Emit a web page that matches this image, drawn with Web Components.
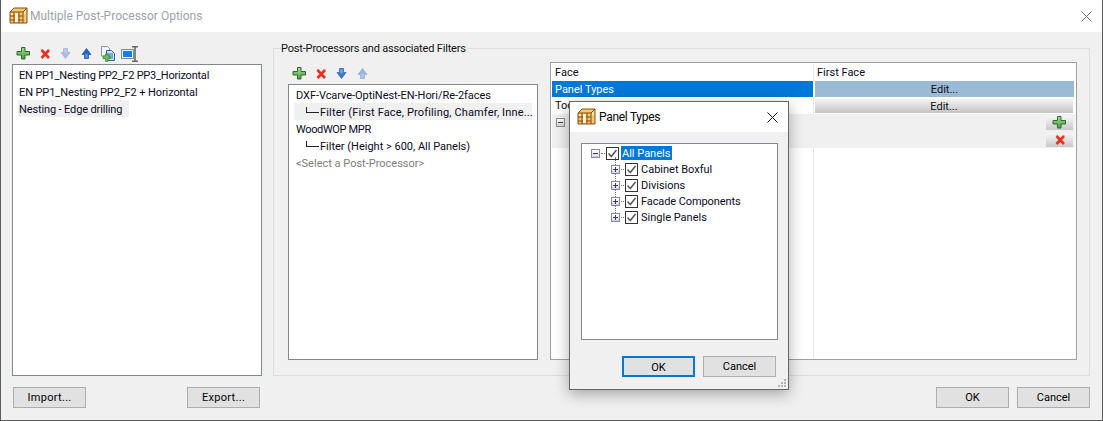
<!DOCTYPE html>
<html><head><meta charset="utf-8"><title>Multiple Post-Processor Options</title>
<style>
html,body{margin:0;padding:0;background:#f0f0f0}
body{font:11px Roboto,"Noto Sans",sans-serif;color:#000;width:1103px;height:421px;overflow:hidden}
</style></head><body>
<pp-window>
  <pp-titlebar slot="title" dim>Multiple Post-Processor Options</pp-titlebar>
  <div slot="left" style="display:contents">
    <pp-toolbar gap="5"><pp-icon name="plus"></pp-icon><pp-icon name="cross"></pp-icon><pp-icon name="down" faded></pp-icon><pp-icon name="up"></pp-icon><pp-icon name="copy"></pp-icon><pp-icon name="rename"></pp-icon></pp-toolbar>
  </div>
  <pp-list slot="leftlist">
    <pp-item style="letter-spacing:-.22px;padding-left:1px">EN PP1_Nesting PP2_F2 PP3_Horizontal</pp-item>
    <pp-item style="letter-spacing:-.1px;padding-left:1px">EN PP1_Nesting PP2_F2 + Horizontal</pp-item>
    <pp-item current fit style="letter-spacing:-.13px;padding-left:1px">Nesting - Edge drilling</pp-item>
  </pp-list>
  <pp-group slot="group" label="Post-Processors and associated Filters">
    <div style="display:flex;gap:12px;align-items:flex-start;flex:1">
      <div style="display:flex;flex-direction:column;width:250px;flex:none;height:294px">
        <pp-toolbar gap="5" style="margin:0 0 2px 4px"><pp-icon name="plus"></pp-icon><pp-icon name="cross"></pp-icon><pp-icon name="down"></pp-icon><pp-icon name="up" faded></pp-icon></pp-toolbar>
        <pp-list style="flex:1">
          <pp-item style="letter-spacing:-.05px">DXF-Vcarve-OptiNest-EN-Hori/Re-2faces</pp-item>
          <pp-item current indent style="letter-spacing:.15px">Filter (First Face, Profiling, Chamfer, Inne...</pp-item>
          <pp-item style="letter-spacing:-.35px">WoodWOP MPR</pp-item>
          <pp-item indent>Filter (Height &gt; 600, All Panels)</pp-item>
          <pp-item muted>&lt;Select a Post-Processor&gt;</pp-item>
        </pp-list>
      </div>
      <pp-grid style="margin-top:-4px"></pp-grid>
    </div>
  </pp-group>
  <pp-button slot="import" style="letter-spacing:.3px">Import...</pp-button>
  <pp-button slot="export" style="letter-spacing:.3px">Export...</pp-button>
  <pp-button slot="ok">OK</pp-button>
  <pp-button slot="cancel">Cancel</pp-button>
  <pp-dialog slot="dialog">
    <pp-tree>
      <pp-node root selected>All Panels</pp-node>
      <pp-node>Cabinet Boxful</pp-node>
      <pp-node>Divisions</pp-node>
      <pp-node style="letter-spacing:-.1px">Facade Components</pp-node>
      <pp-node last>Single Panels</pp-node>
    </pp-tree>
  </pp-dialog>
</pp-window>
<script>
const ICONS={
plus:`<defs><linearGradient id="g" x1="0" y1="0" x2="0" y2="1"><stop offset="0" stop-color="#a6dc94"/><stop offset="1" stop-color="#4f9a45"/></linearGradient></defs><path d="M5.5 1.500h3.500v4h4.500v3.500H9v4H5.500V9H1V5.500h4.500z" fill="url(#g)" stroke="#2f6b2c"/>`,
cross:`<path d="M4.500 4L12 12M12 4L4.500 12" stroke="#e8301c" stroke-width="2.600" fill="none"/><path d="M3.800 3.500l1.200-.300M11.400 3.200l1.200.300" stroke="#ff9a80" stroke-width="1" fill="none"/>`,
down:`<path d="M5.500 2.500h4v4h2.500L7.500 12.500 3 6.500h2.500z" fill="#3f78d0" stroke="#2c5aa8" stroke-width=".7"/><path d="M6.300 3.300h2.400v4H6.300z" fill="#7ba6e6"/>`,
up:`<path d="M5.500 12.500h4v-4h2.500L7.500 2.500 3 8.500h2.500z" fill="#1f66c8" stroke="#1c4f9c" stroke-width=".7"/><path d="M6.300 11.700h2.400v-4H6.300z" fill="#5e97e6"/>`,
copy:`<path d="M1.500.5h6l2 2V10h-8z" fill="#f3f7fc" stroke="#7d95b4"/><path d="M6.500 4.500h5l3 3v7h-8z" fill="#cfe0f4" stroke="#2f5f9e"/><path d="M8 8h5M8 10h5M8 12h5" stroke="#2f6fc0"/><path d="M3 10h2.500V7.800H8V10h2v2.500H8v2.800H5.500v-2.800H3z" fill="#6fc05c" stroke="#2f7a2c" stroke-width=".7"/>`,
rename:`<rect x=".5" y="3.500" width="12" height="9" fill="#eef2f7" stroke="#7c8ca4"/><rect x="2" y="5" width="9" height="6" fill="#1080f0"/><path d="M11 .8h6M11 15.200h6M14 .8v14.400" stroke="#6a6a6a" stroke-width="1.600" fill="none"/>`};
function def(tag,css,html,init){
  customElements.define(tag,class extends HTMLElement{
    constructor(){super();const r=this.attachShadow({mode:'open'});r.innerHTML=`<style>${css}</style>`+(typeof html==='function'?html(this):html);}
    connectedCallback(){if(init&&!this._i){this._i=1;init(this)}}
  });
}
def('pp-icon',`:host{display:inline-block;width:16px;height:16px;flex:none;line-height:0}:host([faded]){opacity:.42}svg{display:block;width:16px;height:16px}`,'',el=>{
  el.shadowRoot.innerHTML+=`<svg viewBox="0 0 16 16" style="overflow:visible">${ICONS[el.getAttribute('name')]}</svg>`;
});
def('pp-appicon',`:host{display:block;width:19px;height:18px;flex:none;margin-top:-2px}svg{display:block}`,`<svg width="19" height="18" viewBox="0 0 19 18"><path d="M1 6L5 2h13v15H1z" fill="#f3c873" stroke="#8a4a12"/><path d="M1 6h13l4-4M14 6v11M1 10h13M1 14h13M5 6v11M10 6v11M14 6" stroke="#8a4a12" fill="none"/><rect x="6" y="7" width="3" height="9" fill="#fff3c8"/><path d="M15 6l2-2v3l-2 2zM2 7h2v2H2z" fill="#ffe9a8"/></svg>`);
def('pp-titlebar',`:host{display:flex;align-items:center;height:32px;background:#fff;padding-left:8px;gap:2px;font-size:12px;box-sizing:border-box;flex:none}
 .t{color:#000}:host([dim]) .t{color:#9aa3ad}:host([dim]) svg.x{stroke:#6e6e6e}.sp{flex:1}svg.x{stroke:#111;margin-right:10px}`,
 `<pp-appicon></pp-appicon><span class="t"><slot></slot></span><span class="sp"></span><svg class="x" width="11" height="11" viewBox="0 0 11 11" fill="none"><path d="M.5.5l10 10M10.500.5l-10 10"/></svg>`);
def('pp-toolbar',`:host{display:flex;align-items:center;flex:none;height:16px}`,`<slot></slot>`,el=>{el.style.gap=(el.getAttribute('gap')||4)+'px'});
def('pp-list',`:host{display:flex;flex-direction:column;background:#fff;border:1px solid #828790;box-sizing:border-box;padding:1px 5px}`,`<slot></slot>`);
def('pp-item',`:host{display:flex;align-items:center;height:17px;box-sizing:border-box;padding-top:2px;padding-left:2px;white-space:nowrap;color:#0a0a1e;flex:none}
 :host([current]){background:#f0f0f0}:host([fit]){align-self:flex-start;padding-right:7px}:host([muted]){color:#7d7d7d}
 .l{display:none;flex:none;width:12px;height:5px;margin:-5px 1px 0 10px;border-left:1px solid #222;border-bottom:1px solid #222;box-sizing:content-box}:host([indent]) .l{display:block}`,`<span class="l"></span><slot></slot>`);
def('pp-button',`:host{display:inline-flex;align-items:center;justify-content:center;box-sizing:border-box;width:73px;height:21px;background:#e1e1e1;border:1px solid #adadad;color:#000;flex:none}
 :host([default]){border:2px solid #0078d7;padding-top:1px}`,`<slot></slot>`);
def('pp-group',`:host{display:flex;flex-direction:column;box-sizing:border-box;border:1px solid #dcdcdc;padding:0 12px 16px 14px;width:817px;height:328px}
 .lab{align-self:flex-start;margin:-8px 0 0 -7px;padding:0 2px 0 0;height:16px;line-height:16px;background:#f0f0f0;color:#111;letter-spacing:-.17px}
 .c{display:flex;flex:1;margin-top:9px}`,
 `<span class="lab" id="l"></span><div class="c"><slot></slot></div>`,el=>{el.shadowRoot.getElementById('l').textContent=el.getAttribute('label')});
def('pp-box',`:host{display:inline-block;width:9px;height:9px;box-sizing:border-box;border:1px solid #8a8a8a;background:linear-gradient(#fff,#d8d8d8);position:relative;flex:none}
 i,b{position:absolute;background:#2a3f7a}i{left:1px;right:1px;top:3px;height:1px}b{top:1px;bottom:1px;left:3px;width:1px}:host([minus]) b{display:none}`,`<i></i><b></b>`);
def('pp-grid',`:host{display:flex;flex-direction:column;width:527px;height:298px;box-sizing:border-box;border:1px solid #a0a0a0;background:#fff;flex:none;padding:1px}
 .r{display:grid;grid-template-columns:262px 1fr;flex:none}
 .c{height:17px;line-height:17px;padding-left:3px;white-space:nowrap;overflow:hidden;color:#0a0a1e}
 .sep{border-right:1px solid #e6e6e6}
 .sel{background:#0078d7;color:#fff;height:16px;line-height:18px;border-right:1px solid #fff}
 .ed1{margin:0 1px;height:16px;line-height:18px;background:#9bbad6;color:#111;text-align:center;overflow:hidden}
 .ed2{margin:2px 2px 1px 1px;height:14px;line-height:15px;background:linear-gradient(#f4f4f4,#c4c4c4);color:#111;text-align:center;overflow:hidden}
 .grey{background:#f0f0f0;height:34px;display:flex;justify-content:space-between;box-sizing:border-box;padding:0 2px 0 4px}
 .sb{display:flex;flex-direction:column;gap:3px;padding-top:2px}.sb span{display:flex;width:27px;height:14px;background:linear-gradient(#f6f6f6,#c9c9c9);justify-content:center;align-items:center}
 .rest{flex:1;display:grid;grid-template-columns:262px 1fr}`,
 `<div class="r"><div class="c sep">Face</div><div class="c">First Face</div></div>
  <div class="r"><div class="c sel">Panel Types</div><div class="ed1">Edit...</div></div>
  <div class="r"><div class="c sep">Tools</div><div class="ed2">Edit...</div></div>
  <div class="grey"><pp-box minus style="margin-top:4px"></pp-box><div class="sb"><span><pp-icon name="plus"></pp-icon></span><span><pp-icon name="cross"></pp-icon></span></div></div>
  <div class="rest"><div class="sep"></div><div></div></div>`);
def('pp-tree',`:host{display:block;box-sizing:border-box;width:197px;height:197px;border:1px solid #828790;background:#fff;padding:1px 0 0 9px;flex:none;position:relative}`,`<slot></slot>`);
def('pp-check',`:host{display:inline-block;width:13px;height:13px;box-sizing:border-box;border:1px solid #333;background:#fff;flex:none}svg{display:block}`,`<svg width="11" height="11" viewBox="0 0 11 11" fill="none"><path d="M1.500 5.500l2.800 3L9.500 2" stroke="#555" stroke-width="1.500"/></svg>`);
def('pp-node',`:host{display:flex;align-items:center;height:16px;position:relative;white-space:nowrap;color:#0a0a1e}
 :host(:not([root])){padding-left:20px}
 .d{width:3px;margin:0 1px;border-top:1px dotted #777;height:0;flex:none}:host([root]) .d{width:4px}
 .t{padding:0 2px 0 1px;margin-left:2px;height:14px;line-height:16px;overflow:hidden}
 :host([selected]) .t{background:#0078d7;color:#fff}
 .v{position:absolute;left:24px;top:-4px;height:16px;border-left:1px dotted #777}
 :host([root]) .v{display:none}:host([last]) .v{height:10px}`,
 el=>`<span class="v"></span><pp-box ${el.hasAttribute('root')?'minus':''}></pp-box><span class="d"></span><pp-check></pp-check><span class="t"><slot></slot></span>`);
def('pp-dialog',`:host{position:absolute;left:568px;top:101px;width:220px;height:289px;box-sizing:border-box;border:1px solid #666;background:#f0f0f0;box-shadow:0 4px 14px rgba(0,0,0,.32);display:flex;flex-direction:column;z-index:2}
 .b{flex:1;padding:11px 10px 0 11px;display:flex;flex-direction:column}
 .f{display:flex;justify-content:flex-end;gap:8px;margin-top:16px;padding-right:2px}
 .grip{position:absolute;right:1px;bottom:1px;width:10px;height:10px}`,
 `<pp-titlebar style="height:30px;padding-left:7px;gap:3px;letter-spacing:-.3px">Panel Types</pp-titlebar>
  <div class="b"><slot></slot><div class="f"><pp-button default>OK</pp-button><pp-button>Cancel</pp-button></div></div>
  <svg class="grip" viewBox="0 0 10 10"><path d="M7 1h2v2H7zM4 4h2v2H4zM7 4h2v2H7zM1 7h2v2H1zM4 7h2v2H4zM7 7h2v2H7z" fill="#b5b5b5"/></svg>`);
def('pp-window',`:host{display:flex;flex-direction:column;position:relative;width:1103px;height:421px;box-sizing:border-box;border:1px solid #5c5c5c;border-top:none;background:#f0f0f0}
 .m{display:flex;flex:1;padding:0 12px 0 11px;gap:11px;margin-top:14px;min-height:0}
 .l{display:flex;flex-direction:column;width:250px;flex:none}
 .tb{margin:0 0 2px 4px;height:16px;flex:none}
 ::slotted(pp-list){height:312px;flex:none}
 .gw{padding-top:2px;display:flex}
 .f{display:flex;padding:11px 12px 12px 12px;flex:none}
 .f2{display:flex;gap:8px;margin-left:auto}
 .f1{display:flex;justify-content:space-between;width:247px}`,
 `<slot name="title"></slot>
  <div class="m"><div class="l"><div class="tb"><slot name="left"></slot></div><slot name="leftlist"></slot></div><div class="gw"><slot name="group"></slot></div></div>
  <div class="f"><div class="f1"><slot name="import"></slot><slot name="export"></slot></div><div class="f2"><slot name="ok"></slot><slot name="cancel"></slot></div></div>
  <slot name="dialog"></slot>`);
</script>
</body></html>
